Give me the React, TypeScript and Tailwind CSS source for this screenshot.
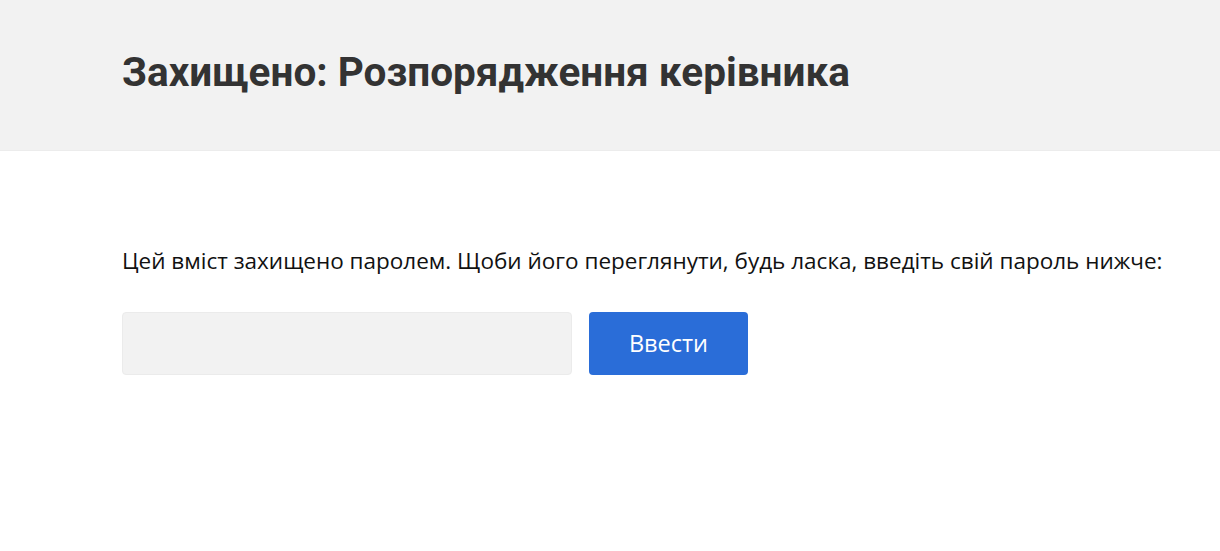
export default function App() {
  return (
    <div className="min-h-[551px] bg-white">
      <div className="h-[151px] bg-[#f2f2f2] border-b border-[#ececec] flex items-center px-[122px]">
        <h1 className="text-[40.5px] font-bold text-[#333333] leading-none pb-[6px]" style={{ fontFamily: "Roboto, sans-serif" }}>
          Захищено: Розпорядження керівника
        </h1>
      </div>
      <div className="px-[122px] pt-[93px]" style={{ fontFamily: "'Open Sans', sans-serif" }}>
        <p className="text-[22.5px] text-[#111111] leading-[34px] whitespace-nowrap">
          Цей вміст захищено паролем. Щоби його переглянути, будь ласка, введіть свій пароль нижче:
        </p>
        <div className="flex gap-[17px] mt-[34px]">
          <input type="password" className="w-[450px] h-[63px] bg-[#f2f2f2] border border-[#ebebeb] rounded-[4px] outline-none" />
          <button className="w-[159px] h-[63px] bg-[#2a6dd8] text-white text-[23.5px] rounded-[4px]">Ввести</button>
        </div>
      </div>
    </div>
  );
}
